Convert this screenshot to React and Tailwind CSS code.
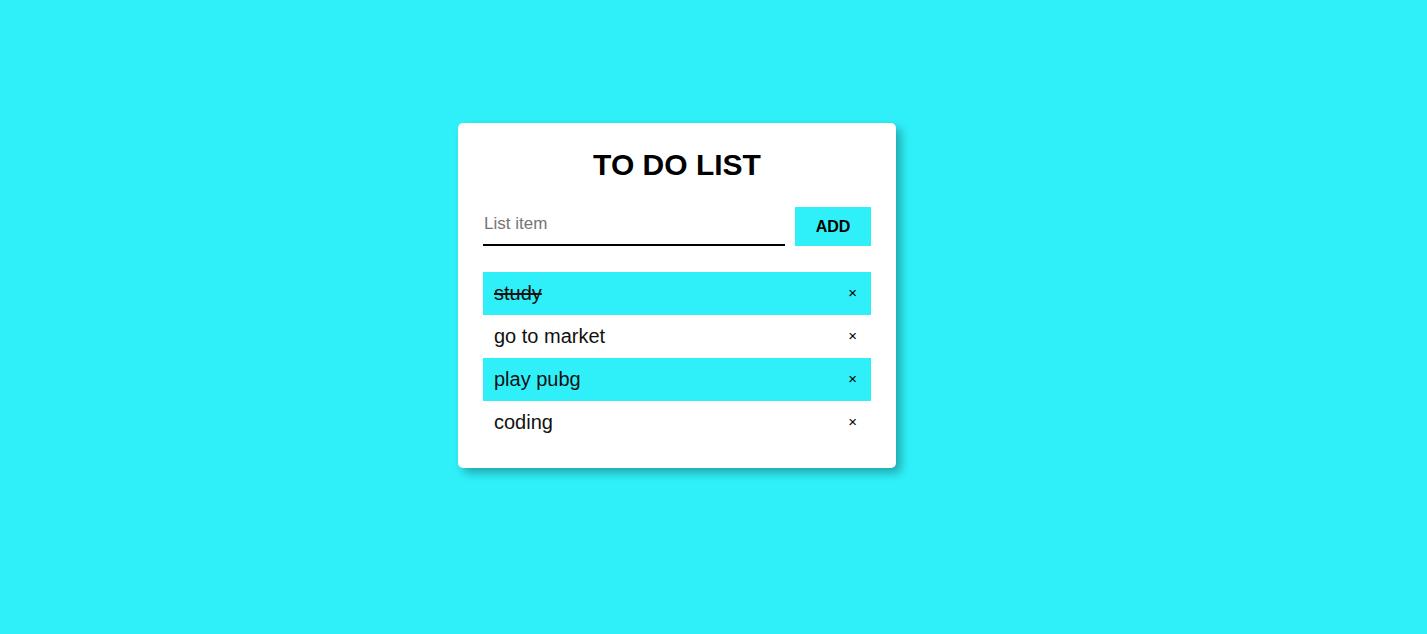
import React from 'react';

const items = [
    { text: 'study', done: true, hl: true },
    { text: 'go to market', done: false, hl: false },
    { text: 'play pubg', done: false, hl: true },
    { text: 'coding', done: false, hl: false },
];

const App = () => {
    return (
        <div className="min-h-screen w-full bg-[#2ff0f8] flex pl-[458px] pt-[123px]" style={{ fontFamily: '"Liberation Sans", Arial, sans-serif' }}>
            <div className="w-[438px] h-[345px] bg-white rounded-[5px] shadow-[5px_5px_10px_rgba(0,0,0,0.3)] pt-[25px] px-[25px] pb-[24px]">
                <h1 className="text-center text-[30px] font-bold text-black leading-[34px]">TO DO LIST</h1>
                <div className="flex gap-[10px] mt-[25px] h-[39px]">
                    <input
                        type="text"
                        placeholder="List item"
                        className="w-[302px] h-[39px] border-b-2 border-black outline-none text-[17px] pl-px pb-[4px] placeholder:text-[#757575]"
                    />
                    <button className="w-[76px] h-[39px] bg-[#2ff0f8] text-[16px] font-bold text-black">ADD</button>
                </div>
                <ul className="mt-[26px]">
                    {items.map((it) => (
                        <li key={it.text} className={`h-[43px] flex items-center justify-between pl-[11px] pr-[14px] ${it.hl ? 'bg-[#2ff0f8]' : 'bg-white'}`}>
                            <span className={`text-[20px] text-[#111] -mt-[2px] ${it.done ? 'line-through' : ''}`}>{it.text}</span>
                            <span className="text-[15px] text-black">×</span>
                        </li>
                    ))}
                </ul>
            </div>
        </div>
    );
};

export default App;
